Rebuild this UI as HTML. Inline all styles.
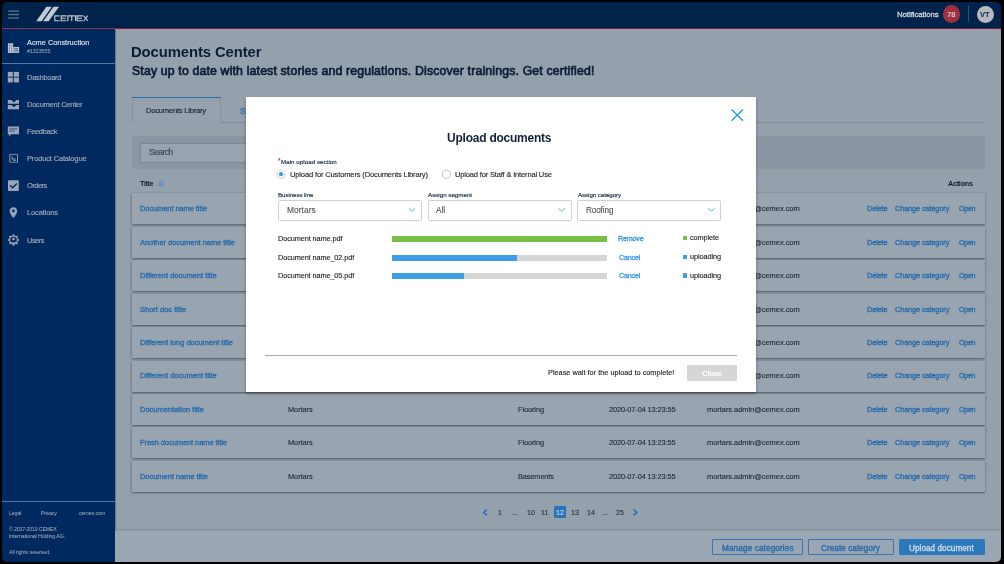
<!DOCTYPE html>
<html><head><meta charset="utf-8">
<style>
*{margin:0;padding:0;box-sizing:border-box}
html,body{width:1004px;height:564px;overflow:hidden;background:#94a0ac;font-family:"Liberation Sans",sans-serif}
body{position:relative}
.a{position:absolute}
.t{position:absolute;white-space:nowrap;line-height:10px;font-family:"Liberation Sans",sans-serif;will-change:transform}
#frame{position:absolute;left:2px;top:2px;width:999px;height:559.5px;border-radius:5px;box-shadow:0 0 0 60px #000;z-index:100}
.row{position:absolute;left:131.6px;width:853.7px;height:31px;background:#98a4af;box-shadow:0 1.5px 1.5px rgba(40,52,68,.4),1px 0 2px rgba(45,58,75,.15),-1px 0 2px rgba(45,58,75,.2)}
.sel{position:absolute;top:200px;height:21px;border:1px solid #cfcfcf;border-radius:1.5px;background:#fff;z-index:11}
.bar{position:absolute;left:392.4px;width:214.4px;height:6px;background:#d5d5d5;z-index:11}
.bar i{position:absolute;left:0;top:0;height:6px}
.sq{position:absolute;left:682.5px;width:4.1px;height:4.1px;z-index:11}
.btn{position:absolute;top:539px;height:16.4px;border:1px solid #3576b3;border-radius:1px}
</style></head><body>
<!-- header -->
<div class="a" style="left:0;top:0;width:1004px;height:28px;background:#00234b"></div>
<div class="a" style="left:0;top:27px;width:1004px;height:1px;background:#001d45"></div>
<div class="a" style="left:0;top:28px;width:115px;height:1px;background:#843a58"></div>
<div class="a" style="left:115px;top:28px;width:889px;height:1px;background:#7a2444"></div>
<div class="a" style="left:115px;top:29px;width:889px;height:1px;background:#9c94a2;z-index:1"></div>
<svg class="a" style="left:0;top:0" width="100" height="28">
  <g fill="#5f7392"><rect x="8.2" y="10.4" width="10.8" height="1.3"/><rect x="8.2" y="13.9" width="10.8" height="1.3"/><rect x="8.2" y="17.4" width="10.8" height="1.3"/></g>
  <g fill="#c4cad3">
    <polygon points="36.2,21.3 41.6,21.3 51.8,6.8 46.4,6.8"/>
    <polygon points="43.2,21.3 48.6,21.3 59,6.8 53.5,6.8"/>
  </g>
  <g fill="none" stroke="#c4cad3" stroke-width="1.15">
    <path d="M59.6,15.8 H54.8 V20.7 H59.6"/>
    <path d="M66.6,15.8 H61.2 V20.7 H66.6 M61.2,18.25 H65.8"/>
    <path d="M67.9,20.9 V15.8 H75.6 V20.9 M71.75,15.8 V20.9"/>
    <path d="M82.8,15.8 H77.1 V20.7 H82.8 M77.1,18.25 H82"/>
    <path d="M83.6,15.6 L87.9,21 M87.9,15.6 L83.6,21"/>
  </g>
</svg>
<div class="a" style="left:951.5px;top:14px;width:17.2px;height:17.2px;margin:-8.6px 0 0 -8.6px;border-radius:50%;background:#a0303f"></div>
<div class="a" style="left:968px;top:6px;width:1px;height:16px;background:#36506f"></div>
<div class="a" style="left:985.3px;top:14.2px;width:17px;height:17px;margin:-8.5px 0 0 -8.5px;border-radius:50%;background:#b3b9c2"></div>
<!-- sidebar -->
<div class="a" style="left:0;top:29px;width:115px;height:540px;background:#002a5f;box-shadow:1px 0 1px rgba(40,55,75,.35)"></div>
<div class="a" style="left:0;top:63px;width:115px;height:1px;background:#56749f"></div>
<div class="a" style="left:0;top:501px;width:115px;height:1px;background:#56749f"></div>
<svg class="a" style="left:0;top:29px" width="30" height="230">
  <g fill="#bcc4cf">
    <!-- building -->
    <rect x="7.9" y="14.3" width="5.3" height="9.6"/>
    <rect x="13.2" y="18" width="5.9" height="5.9"/>
  </g>
  <g fill="#3a5580">
    <rect x="9" y="16" width="1" height="1"/><rect x="11.2" y="16" width="1" height="1"/>
    <rect x="9" y="18.6" width="1" height="1"/><rect x="11.2" y="18.6" width="1" height="1"/>
    <rect x="9" y="21.2" width="1" height="1"/><rect x="11.2" y="21.2" width="1" height="1"/>
    <rect x="14.3" y="19.4" width="3.8" height="1"/><rect x="14.3" y="21.4" width="3.8" height="1"/>
  </g>
  <g fill="#9aa6b8">
    <!-- dashboard -->
    <rect x="7.8" y="42.9" width="5" height="4.8"/><rect x="13.8" y="42.9" width="5.2" height="4.8"/>
    <rect x="7.8" y="48.6" width="5" height="4.8"/><rect x="13.8" y="48.6" width="5.2" height="4.8"/>
    <!-- document center -->
    <path d="M7.8,70.9 H11.3 L13.9,73.6 L16.5,70.9 H19 V74.8 H7.8 Z"/>
    <path d="M7.8,76 H11.3 L13.9,78.3 L16.5,76 H19 V80.3 H7.8 Z"/>
    <!-- feedback -->
    <path d="M7.8,97.5 H19 V105.2 H11.2 L9.2,107.4 V105.2 H7.8 Z"/>
    <!-- product catalogue -->
    <path d="M9.4,125.2 H18 V133.6 H9.4 Z M10.3,126.1 V132.7 H17.1 V126.1 Z"/>
    <path d="M11.6,127.2 H12.5 V129.6 H15.6 V130.4 H11.6 Z M13.2,131.2 H16 V132 H13.2Z"/>
    <!-- orders -->
    <rect x="8" y="151.3" width="10.8" height="10.8" rx="0.8"/>
    <!-- locations -->
    <path d="M13.4,178.2 C10.8,178.2 9.6,180.2 9.6,182 C9.6,184.6 13.4,189 13.4,189 C13.4,189 17.2,184.6 17.2,182 C17.2,180.2 16,178.2 13.4,178.2 Z"/>
    <!-- users gear -->
    <circle cx="13.5" cy="211" r="4.6"/>
  </g>
  <g fill="none" stroke="#9aa6b8" stroke-width="1.6">
    <path d="M13.5,205.3 V216.7 M7.8,211 H19.2 M9.5,207 L17.5,215 M17.5,207 L9.5,215"/>
  </g>
  <g fill="#002a5f">
    <path d="M9.6,156.8 L10.6,155.8 L12.6,157.8 L16.4,154 L17.4,155 L12.6,159.8 Z"/>
    <circle cx="13.4" cy="182" r="1.4"/>
    <circle cx="13.5" cy="211" r="3.3"/>
    <rect x="9.4" y="99.4" width="7.8" height="1" fill="#3a5580"/><rect x="9.4" y="101.6" width="5.4" height="1" fill="#3a5580"/>
  </g>
  <g fill="#9aa6b8"><circle cx="13.5" cy="210" r="1.3"/><path d="M11,212.6 Q13.5,214.6 16,212.6 L15.6,213.9 Q13.5,215.2 11.4,213.9 Z"/></g>
</svg>
<!-- main: tabs -->
<div class="a" style="left:131.8px;top:97.3px;width:88.8px;height:25px;border-left:1px solid #8793a0;border-right:1px solid #8793a0;background:#95a1ac"></div>
<div class="a" style="left:131.8px;top:96.6px;width:88.8px;height:1.1px;background:#2a6cae"></div>
<div class="a" style="left:220.5px;top:122px;width:764.7px;height:1px;background:#7f8b99"></div>
<!-- search panel -->
<div class="a" style="left:131.7px;top:135.7px;width:853.5px;height:32.9px;background:#8a96a3"></div>
<div class="a" style="left:140.3px;top:142.5px;width:500px;height:20.3px;background:#97a3ae;border:1px solid #7c8896;border-radius:1px"></div>
<!-- sort icon -->
<svg class="a" style="left:155px;top:178px" width="12" height="12">
  <path d="M3.4,4.9 L5.95,2.3 L8.5,4.9 Z M3.4,6.5 L5.95,9 L8.5,6.5 Z" fill="#7fa6cc" stroke="#4f87bd" stroke-width="0.7" stroke-linejoin="round"/>
</svg>
<!-- rows -->
<div class="row" style="top:193.3px"></div>
<div class="row" style="top:226.75px"></div>
<div class="row" style="top:260.2px"></div>
<div class="row" style="top:293.65px"></div>
<div class="row" style="top:327.1px"></div>
<div class="row" style="top:360.55px"></div>
<div class="row" style="top:394px"></div>
<div class="row" style="top:427.45px"></div>
<div class="row" style="top:460.9px"></div>
<!-- pagination -->
<svg class="a" style="left:478px;top:505px" width="165" height="14">
  <path d="M486.8,4.6 L483.6,7.4 L486.8,10.2 M633.6,4.6 L636.8,7.4 L633.6,10.2" transform="translate(-478,0)" fill="none" stroke="#2a71b8" stroke-width="1.6"/>
</svg>
<div class="a" style="left:554px;top:506.1px;width:12.2px;height:12.2px;background:#2a74ba;border-radius:1px"></div>
<!-- footer band -->
<div class="a" style="left:115px;top:529.4px;width:889px;height:1.1px;background:#808c99"></div>
<div class="a" style="left:115px;top:530.5px;width:889px;height:34px;background:#9aa6b1"></div>
<div class="btn" style="left:712.1px;width:91.4px"></div>
<div class="btn" style="left:808.1px;width:86.3px"></div>
<div class="btn" style="left:898.9px;width:86.3px;background:#2c78bd;border-color:#2c78bd"></div>
<!-- modal -->
<div class="a" style="left:246.2px;top:96.8px;width:509.6px;height:295px;background:#fff;box-shadow:0 1.5px 3px rgba(0,0,0,.35);z-index:10"></div>
<svg class="a" style="left:728px;top:106px;z-index:11" width="18" height="18">
  <path d="M3.6,3.5 L14.9,14.8 M14.9,3.5 L3.6,14.8" stroke="#2f9be6" stroke-width="1.45" fill="none"/>
</svg>
<svg class="a" style="left:270px;top:165px;z-index:11" width="190" height="20">
  <circle cx="11" cy="9.2" r="4.1" fill="#fff" stroke="#c6c6c6" stroke-width="0.8"/>
  <circle cx="11" cy="9.2" r="2.1" fill="#3c9be2"/>
  <circle cx="176.4" cy="9.2" r="4.1" fill="#fff" stroke="#b4b4b4" stroke-width="0.8"/>
</svg>
<div class="sel" style="left:278px;width:143.5px"></div>
<div class="sel" style="left:427.5px;width:144px"></div>
<div class="sel" style="left:577.4px;width:143.6px"></div>
<svg class="a" style="left:400px;top:204px;z-index:12" width="330" height="12">
  <g fill="none" stroke="#4aa3e6" stroke-width="0.9">
    <path d="M8.8,4.4 L12.05,7.3 L15.3,4.4"/>
    <path d="M158.4,4.4 L161.65,7.3 L164.9,4.4"/>
    <path d="M307.9,4.4 L311.25,7.3 L314.6,4.4"/>
  </g>
</svg>
<div class="bar" style="top:236.1px"><i style="width:214.4px;background:#77c043"></i></div>
<div class="bar" style="top:255.1px"><i style="width:124.6px;background:#3d9ee6"></i></div>
<div class="bar" style="top:272.5px"><i style="width:71.5px;background:#3d9ee6"></i></div>
<div class="sq" style="top:235.65px;background:#77c043"></div>
<div class="sq" style="top:254.75px;background:#3d9ee6"></div>
<div class="sq" style="top:273.45px;background:#3d9ee6"></div>
<div class="a" style="left:265px;top:354.7px;width:472px;height:1px;background:#a9a9a9;z-index:11"></div>
<div class="a" style="left:687.3px;top:365.1px;width:49.7px;height:16.3px;background:#d6d6d6;border-radius:1px;z-index:11"></div>
<div class="t" style="left:896.85px;top:9.89px;font-size:7.84px;letter-spacing:-0.073px;color:#d3d9e2;-webkit-text-stroke:0.27px #d3d9e2">Notifications</div>
<div class="t" style="left:947.49px;top:9.69px;font-size:7.60px;letter-spacing:0.000px;color:#eadde0;-webkit-text-stroke:0.12px #eadde0">78</div>
<div class="t" style="left:980.37px;top:9.99px;font-size:7.60px;letter-spacing:0.000px;color:#0d2140;font-weight:bold">VT</div>
<div class="t" style="left:27.45px;top:38.08px;font-size:7.34px;letter-spacing:0.022px;color:#d2d8e1;-webkit-text-stroke:0.24px #d2d8e1">Acme Construction</div>
<div class="t" style="left:27.45px;top:45.66px;font-size:5.33px;letter-spacing:-0.042px;color:#a9b3c3">#1323555</div>
<div class="t" style="left:27.45px;top:72.79px;font-size:7.50px;letter-spacing:-0.277px;color:#a2adbd;-webkit-text-stroke:0.12px #a2adbd">Dashboard</div>
<div class="t" style="left:27.45px;top:100.09px;font-size:7.50px;letter-spacing:-0.234px;color:#a2adbd;-webkit-text-stroke:0.12px #a2adbd">Document Center</div>
<div class="t" style="left:27.45px;top:127.19px;font-size:7.50px;letter-spacing:-0.355px;color:#a2adbd;-webkit-text-stroke:0.12px #a2adbd">Feedback</div>
<div class="t" style="left:27.45px;top:154.29px;font-size:7.50px;letter-spacing:-0.160px;color:#a2adbd;-webkit-text-stroke:0.12px #a2adbd">Product Catalogue</div>
<div class="t" style="left:27.45px;top:181.39px;font-size:7.50px;letter-spacing:-0.534px;color:#a2adbd;-webkit-text-stroke:0.12px #a2adbd">Orders</div>
<div class="t" style="left:27.45px;top:208.49px;font-size:7.50px;letter-spacing:-0.132px;color:#a2adbd;-webkit-text-stroke:0.12px #a2adbd">Locations</div>
<div class="t" style="left:27.45px;top:235.59px;font-size:7.50px;letter-spacing:-0.534px;color:#a2adbd;-webkit-text-stroke:0.12px #a2adbd">Users</div>
<div class="t" style="left:8.55px;top:508.06px;font-size:5.33px;letter-spacing:-0.152px;color:#a9b3c2">Legal</div>
<div class="t" style="left:41.25px;top:508.06px;font-size:5.23px;letter-spacing:-0.189px;color:#a9b3c2">Privacy</div>
<div class="t" style="left:79.15px;top:508.06px;font-size:5.37px;letter-spacing:-0.143px;color:#a9b3c2">cemex.com</div>
<div class="t" style="left:8.55px;top:523.86px;font-size:5.28px;letter-spacing:-0.180px;color:#a9b3c2">© 2017-2019 CEMEX</div>
<div class="t" style="left:8.55px;top:531.06px;font-size:5.32px;letter-spacing:-0.123px;color:#a9b3c2">International Holding AG.</div>
<div class="t" style="left:8.55px;top:546.86px;font-size:5.30px;letter-spacing:-0.125px;color:#a9b3c2">All rights reserved.</div>
<div class="t" style="left:131.06px;top:46.97px;font-size:14.84px;letter-spacing:-0.094px;color:#0b1c38;font-weight:bold">Documents Center</div>
<div class="t" style="left:132.05px;top:65.94px;font-size:12.28px;letter-spacing:0.168px;color:#0b1c38;-webkit-text-stroke:0.67px #0b1c38">Stay up to date with latest stories and regulations. Discover trainings. Get certified!</div>
<div class="t" style="left:145.85px;top:105.99px;font-size:7.67px;letter-spacing:-0.263px;color:#172130;-webkit-text-stroke:0.12px #172130">Documents Library</div>
<div class="t" style="left:240.05px;top:106.00px;font-size:8.37px;letter-spacing:0.206px;color:#2a6cae;-webkit-text-stroke:0.30px #2a6cae">Staff</div>
<div class="t" style="left:148.85px;top:147.40px;font-size:8.80px;letter-spacing:-0.736px;color:#3a4552;-webkit-text-stroke:0.12px #3a4552">Search</div>
<div class="t" style="left:140.15px;top:178.88px;font-size:7.20px;letter-spacing:-0.294px;color:#0b1c38;font-weight:bold">Title</div>
<div class="t" style="left:948.45px;top:178.98px;font-size:7.19px;letter-spacing:-0.237px;color:#0b1c38;font-weight:bold">Actions</div>
<div class="t" style="left:140.15px;top:204.19px;font-size:7.46px;letter-spacing:-0.069px;color:#2b6daf;-webkit-text-stroke:0.36px #2b6daf">Document name title</div>
<div class="t" style="left:288.05px;top:204.19px;font-size:7.45px;letter-spacing:-0.086px;color:#1f2833;-webkit-text-stroke:0.12px #1f2833">Mortars</div>
<div class="t" style="left:517.75px;top:204.19px;font-size:7.40px;letter-spacing:-0.099px;color:#1f2833;-webkit-text-stroke:0.12px #1f2833">Flooring</div>
<div class="t" style="left:609.15px;top:204.18px;font-size:7.38px;letter-spacing:-0.109px;color:#1f2833;-webkit-text-stroke:0.12px #1f2833">2020-07-04 13:23:55</div>
<div class="t" style="left:706.55px;top:204.19px;font-size:7.51px;letter-spacing:-0.053px;color:#1f2833;-webkit-text-stroke:0.12px #1f2833">mortars.admin@cemex.com</div>
<div class="t" style="left:866.65px;top:204.18px;font-size:7.36px;letter-spacing:-0.131px;color:#2b6daf;-webkit-text-stroke:0.35px #2b6daf">Delete</div>
<div class="t" style="left:895.35px;top:204.18px;font-size:7.36px;letter-spacing:-0.124px;color:#2b6daf;-webkit-text-stroke:0.35px #2b6daf">Change category</div>
<div class="t" style="left:958.85px;top:204.18px;font-size:7.18px;letter-spacing:-0.316px;color:#2b6daf;-webkit-text-stroke:0.34px #2b6daf">Open</div>
<div class="t" style="left:140.15px;top:237.64px;font-size:7.51px;letter-spacing:-0.043px;color:#2b6daf;-webkit-text-stroke:0.36px #2b6daf">Another document name title</div>
<div class="t" style="left:288.05px;top:237.64px;font-size:7.45px;letter-spacing:-0.086px;color:#1f2833;-webkit-text-stroke:0.12px #1f2833">Mortars</div>
<div class="t" style="left:517.75px;top:237.64px;font-size:7.40px;letter-spacing:-0.099px;color:#1f2833;-webkit-text-stroke:0.12px #1f2833">Flooring</div>
<div class="t" style="left:609.15px;top:237.63px;font-size:7.38px;letter-spacing:-0.109px;color:#1f2833;-webkit-text-stroke:0.12px #1f2833">2020-07-04 13:23:55</div>
<div class="t" style="left:706.55px;top:237.64px;font-size:7.51px;letter-spacing:-0.053px;color:#1f2833;-webkit-text-stroke:0.12px #1f2833">mortars.admin@cemex.com</div>
<div class="t" style="left:866.65px;top:237.63px;font-size:7.36px;letter-spacing:-0.131px;color:#2b6daf;-webkit-text-stroke:0.35px #2b6daf">Delete</div>
<div class="t" style="left:895.35px;top:237.63px;font-size:7.36px;letter-spacing:-0.124px;color:#2b6daf;-webkit-text-stroke:0.35px #2b6daf">Change category</div>
<div class="t" style="left:958.85px;top:237.63px;font-size:7.18px;letter-spacing:-0.316px;color:#2b6daf;-webkit-text-stroke:0.34px #2b6daf">Open</div>
<div class="t" style="left:140.15px;top:271.09px;font-size:7.54px;letter-spacing:-0.026px;color:#2b6daf;-webkit-text-stroke:0.37px #2b6daf">Different document title</div>
<div class="t" style="left:288.05px;top:271.09px;font-size:7.45px;letter-spacing:-0.086px;color:#1f2833;-webkit-text-stroke:0.12px #1f2833">Mortars</div>
<div class="t" style="left:517.75px;top:271.09px;font-size:7.40px;letter-spacing:-0.099px;color:#1f2833;-webkit-text-stroke:0.12px #1f2833">Flooring</div>
<div class="t" style="left:609.15px;top:271.08px;font-size:7.38px;letter-spacing:-0.109px;color:#1f2833;-webkit-text-stroke:0.12px #1f2833">2020-07-04 13:23:55</div>
<div class="t" style="left:706.55px;top:271.09px;font-size:7.51px;letter-spacing:-0.053px;color:#1f2833;-webkit-text-stroke:0.12px #1f2833">mortars.admin@cemex.com</div>
<div class="t" style="left:866.65px;top:271.08px;font-size:7.36px;letter-spacing:-0.131px;color:#2b6daf;-webkit-text-stroke:0.35px #2b6daf">Delete</div>
<div class="t" style="left:895.35px;top:271.08px;font-size:7.36px;letter-spacing:-0.124px;color:#2b6daf;-webkit-text-stroke:0.35px #2b6daf">Change category</div>
<div class="t" style="left:958.85px;top:271.08px;font-size:7.18px;letter-spacing:-0.316px;color:#2b6daf;-webkit-text-stroke:0.34px #2b6daf">Open</div>
<div class="t" style="left:140.15px;top:304.54px;font-size:7.55px;letter-spacing:-0.022px;color:#2b6daf;-webkit-text-stroke:0.37px #2b6daf">Short doc title</div>
<div class="t" style="left:288.05px;top:304.54px;font-size:7.45px;letter-spacing:-0.086px;color:#1f2833;-webkit-text-stroke:0.12px #1f2833">Mortars</div>
<div class="t" style="left:517.75px;top:304.54px;font-size:7.40px;letter-spacing:-0.099px;color:#1f2833;-webkit-text-stroke:0.12px #1f2833">Flooring</div>
<div class="t" style="left:609.15px;top:304.53px;font-size:7.38px;letter-spacing:-0.109px;color:#1f2833;-webkit-text-stroke:0.12px #1f2833">2020-07-04 13:23:55</div>
<div class="t" style="left:706.55px;top:304.54px;font-size:7.51px;letter-spacing:-0.053px;color:#1f2833;-webkit-text-stroke:0.12px #1f2833">mortars.admin@cemex.com</div>
<div class="t" style="left:866.65px;top:304.53px;font-size:7.36px;letter-spacing:-0.131px;color:#2b6daf;-webkit-text-stroke:0.35px #2b6daf">Delete</div>
<div class="t" style="left:895.35px;top:304.53px;font-size:7.36px;letter-spacing:-0.124px;color:#2b6daf;-webkit-text-stroke:0.35px #2b6daf">Change category</div>
<div class="t" style="left:958.85px;top:304.53px;font-size:7.18px;letter-spacing:-0.316px;color:#2b6daf;-webkit-text-stroke:0.34px #2b6daf">Open</div>
<div class="t" style="left:140.15px;top:337.99px;font-size:7.54px;letter-spacing:-0.025px;color:#2b6daf;-webkit-text-stroke:0.37px #2b6daf">Different long document title</div>
<div class="t" style="left:288.05px;top:337.99px;font-size:7.45px;letter-spacing:-0.086px;color:#1f2833;-webkit-text-stroke:0.12px #1f2833">Mortars</div>
<div class="t" style="left:517.75px;top:337.99px;font-size:7.40px;letter-spacing:-0.099px;color:#1f2833;-webkit-text-stroke:0.12px #1f2833">Flooring</div>
<div class="t" style="left:609.15px;top:337.98px;font-size:7.38px;letter-spacing:-0.109px;color:#1f2833;-webkit-text-stroke:0.12px #1f2833">2020-07-04 13:23:55</div>
<div class="t" style="left:706.55px;top:337.99px;font-size:7.51px;letter-spacing:-0.053px;color:#1f2833;-webkit-text-stroke:0.12px #1f2833">mortars.admin@cemex.com</div>
<div class="t" style="left:866.65px;top:337.98px;font-size:7.36px;letter-spacing:-0.131px;color:#2b6daf;-webkit-text-stroke:0.35px #2b6daf">Delete</div>
<div class="t" style="left:895.35px;top:337.98px;font-size:7.36px;letter-spacing:-0.124px;color:#2b6daf;-webkit-text-stroke:0.35px #2b6daf">Change category</div>
<div class="t" style="left:958.85px;top:337.98px;font-size:7.18px;letter-spacing:-0.316px;color:#2b6daf;-webkit-text-stroke:0.34px #2b6daf">Open</div>
<div class="t" style="left:140.15px;top:371.44px;font-size:7.54px;letter-spacing:-0.026px;color:#2b6daf;-webkit-text-stroke:0.37px #2b6daf">Different document title</div>
<div class="t" style="left:288.05px;top:371.44px;font-size:7.45px;letter-spacing:-0.086px;color:#1f2833;-webkit-text-stroke:0.12px #1f2833">Mortars</div>
<div class="t" style="left:517.75px;top:371.44px;font-size:7.40px;letter-spacing:-0.099px;color:#1f2833;-webkit-text-stroke:0.12px #1f2833">Flooring</div>
<div class="t" style="left:609.15px;top:371.43px;font-size:7.38px;letter-spacing:-0.109px;color:#1f2833;-webkit-text-stroke:0.12px #1f2833">2020-07-04 13:23:55</div>
<div class="t" style="left:706.55px;top:371.44px;font-size:7.51px;letter-spacing:-0.053px;color:#1f2833;-webkit-text-stroke:0.12px #1f2833">mortars.admin@cemex.com</div>
<div class="t" style="left:866.65px;top:371.43px;font-size:7.36px;letter-spacing:-0.131px;color:#2b6daf;-webkit-text-stroke:0.35px #2b6daf">Delete</div>
<div class="t" style="left:895.35px;top:371.43px;font-size:7.36px;letter-spacing:-0.124px;color:#2b6daf;-webkit-text-stroke:0.35px #2b6daf">Change category</div>
<div class="t" style="left:958.85px;top:371.43px;font-size:7.18px;letter-spacing:-0.316px;color:#2b6daf;-webkit-text-stroke:0.34px #2b6daf">Open</div>
<div class="t" style="left:140.15px;top:404.89px;font-size:7.54px;letter-spacing:-0.030px;color:#2b6daf;-webkit-text-stroke:0.37px #2b6daf">Documentation title</div>
<div class="t" style="left:288.05px;top:404.89px;font-size:7.45px;letter-spacing:-0.086px;color:#1f2833;-webkit-text-stroke:0.12px #1f2833">Mortars</div>
<div class="t" style="left:517.75px;top:404.89px;font-size:7.40px;letter-spacing:-0.099px;color:#1f2833;-webkit-text-stroke:0.12px #1f2833">Flooring</div>
<div class="t" style="left:609.15px;top:404.88px;font-size:7.38px;letter-spacing:-0.109px;color:#1f2833;-webkit-text-stroke:0.12px #1f2833">2020-07-04 13:23:55</div>
<div class="t" style="left:706.55px;top:404.89px;font-size:7.51px;letter-spacing:-0.053px;color:#1f2833;-webkit-text-stroke:0.12px #1f2833">mortars.admin@cemex.com</div>
<div class="t" style="left:866.65px;top:404.88px;font-size:7.36px;letter-spacing:-0.131px;color:#2b6daf;-webkit-text-stroke:0.35px #2b6daf">Delete</div>
<div class="t" style="left:895.35px;top:404.88px;font-size:7.36px;letter-spacing:-0.124px;color:#2b6daf;-webkit-text-stroke:0.35px #2b6daf">Change category</div>
<div class="t" style="left:958.85px;top:404.88px;font-size:7.18px;letter-spacing:-0.316px;color:#2b6daf;-webkit-text-stroke:0.34px #2b6daf">Open</div>
<div class="t" style="left:140.15px;top:438.34px;font-size:7.47px;letter-spacing:-0.064px;color:#2b6daf;-webkit-text-stroke:0.36px #2b6daf">Fresh document name title</div>
<div class="t" style="left:288.05px;top:438.34px;font-size:7.45px;letter-spacing:-0.086px;color:#1f2833;-webkit-text-stroke:0.12px #1f2833">Mortars</div>
<div class="t" style="left:517.75px;top:438.34px;font-size:7.40px;letter-spacing:-0.099px;color:#1f2833;-webkit-text-stroke:0.12px #1f2833">Flooring</div>
<div class="t" style="left:609.15px;top:438.33px;font-size:7.38px;letter-spacing:-0.109px;color:#1f2833;-webkit-text-stroke:0.12px #1f2833">2020-07-04 13:23:55</div>
<div class="t" style="left:706.55px;top:438.34px;font-size:7.51px;letter-spacing:-0.053px;color:#1f2833;-webkit-text-stroke:0.12px #1f2833">mortars.admin@cemex.com</div>
<div class="t" style="left:866.65px;top:438.33px;font-size:7.36px;letter-spacing:-0.131px;color:#2b6daf;-webkit-text-stroke:0.35px #2b6daf">Delete</div>
<div class="t" style="left:895.35px;top:438.33px;font-size:7.36px;letter-spacing:-0.124px;color:#2b6daf;-webkit-text-stroke:0.35px #2b6daf">Change category</div>
<div class="t" style="left:958.85px;top:438.33px;font-size:7.18px;letter-spacing:-0.316px;color:#2b6daf;-webkit-text-stroke:0.34px #2b6daf">Open</div>
<div class="t" style="left:140.15px;top:471.79px;font-size:7.51px;letter-spacing:-0.047px;color:#2b6daf;-webkit-text-stroke:0.36px #2b6daf">Document name title</div>
<div class="t" style="left:288.05px;top:471.79px;font-size:7.45px;letter-spacing:-0.086px;color:#1f2833;-webkit-text-stroke:0.12px #1f2833">Mortars</div>
<div class="t" style="left:517.75px;top:471.79px;font-size:7.40px;letter-spacing:-0.123px;color:#1f2833;-webkit-text-stroke:0.12px #1f2833">Basements</div>
<div class="t" style="left:609.15px;top:471.78px;font-size:7.38px;letter-spacing:-0.109px;color:#1f2833;-webkit-text-stroke:0.12px #1f2833">2020-07-04 13:23:55</div>
<div class="t" style="left:706.55px;top:471.79px;font-size:7.51px;letter-spacing:-0.053px;color:#1f2833;-webkit-text-stroke:0.12px #1f2833">mortars.admin@cemex.com</div>
<div class="t" style="left:866.65px;top:471.78px;font-size:7.36px;letter-spacing:-0.131px;color:#2b6daf;-webkit-text-stroke:0.35px #2b6daf">Delete</div>
<div class="t" style="left:895.35px;top:471.78px;font-size:7.36px;letter-spacing:-0.124px;color:#2b6daf;-webkit-text-stroke:0.35px #2b6daf">Change category</div>
<div class="t" style="left:958.85px;top:471.78px;font-size:7.18px;letter-spacing:-0.316px;color:#2b6daf;-webkit-text-stroke:0.34px #2b6daf">Open</div>
<div class="t" style="left:497.80px;top:508.08px;font-size:7.10px;letter-spacing:0.000px;color:#28323f;-webkit-text-stroke:0.12px #28323f">1</div>
<div class="t" style="left:512.03px;top:508.08px;font-size:7.10px;letter-spacing:0.000px;color:#28323f;-webkit-text-stroke:0.12px #28323f">...</div>
<div class="t" style="left:526.58px;top:508.08px;font-size:7.10px;letter-spacing:0.000px;color:#28323f;-webkit-text-stroke:0.12px #28323f">10</div>
<div class="t" style="left:541.29px;top:508.08px;font-size:7.10px;letter-spacing:0.000px;color:#28323f;-webkit-text-stroke:0.12px #28323f">11</div>
<div class="t" style="left:556.23px;top:508.08px;font-size:7.10px;letter-spacing:0.000px;color:#d0dbe6;-webkit-text-stroke:0.12px #d0dbe6">12</div>
<div class="t" style="left:571.28px;top:508.08px;font-size:7.10px;letter-spacing:0.000px;color:#28323f;-webkit-text-stroke:0.12px #28323f">13</div>
<div class="t" style="left:586.53px;top:508.08px;font-size:7.10px;letter-spacing:0.000px;color:#28323f;-webkit-text-stroke:0.12px #28323f">14</div>
<div class="t" style="left:602.38px;top:508.08px;font-size:7.10px;letter-spacing:0.000px;color:#28323f;-webkit-text-stroke:0.12px #28323f">...</div>
<div class="t" style="left:616.03px;top:508.08px;font-size:7.10px;letter-spacing:0.000px;color:#28323f;-webkit-text-stroke:0.12px #28323f">25</div>
<div class="t" style="left:722.05px;top:543.59px;font-size:8.21px;letter-spacing:0.113px;color:#2a6cae;-webkit-text-stroke:0.42px #2a6cae">Manage categories</div>
<div class="t" style="left:821.35px;top:543.59px;font-size:8.15px;letter-spacing:0.079px;color:#2a6cae;-webkit-text-stroke:0.42px #2a6cae">Create category</div>
<div class="t" style="left:909.15px;top:543.59px;font-size:8.13px;letter-spacing:0.073px;color:#cbd6e2;-webkit-text-stroke:0.42px #cbd6e2">Upload document</div>
<div class="t" style="left:446.95px;top:132.94px;font-size:12.00px;letter-spacing:-0.231px;color:#13223b;font-weight:bold;z-index:12">Upload documents</div>
<div class="t" style="left:277.60px;top:156.07px;font-size:6.40px;letter-spacing:0.000px;color:#d0213a;-webkit-text-stroke:0.12px #d0213a;z-index:12">*</div>
<div class="t" style="left:281.25px;top:156.97px;font-size:6.13px;letter-spacing:0.067px;color:#1b2d4a;-webkit-text-stroke:0.17px #1b2d4a;z-index:12">Main upload section</div>
<div class="t" style="left:289.75px;top:169.79px;font-size:7.61px;letter-spacing:-0.182px;color:#262626;-webkit-text-stroke:0.12px #262626;z-index:12">Upload for Customers (Documents Library)</div>
<div class="t" style="left:454.85px;top:169.79px;font-size:7.57px;letter-spacing:-0.183px;color:#262626;-webkit-text-stroke:0.12px #262626;z-index:12">Upload for Staff &amp; Internal Use</div>
<div class="t" style="left:278.25px;top:189.67px;font-size:6.16px;letter-spacing:-0.070px;color:#1b2d4a;-webkit-text-stroke:0.17px #1b2d4a;z-index:12">Business line</div>
<div class="t" style="left:427.75px;top:189.67px;font-size:6.25px;letter-spacing:-0.029px;color:#1b2d4a;-webkit-text-stroke:0.17px #1b2d4a;z-index:12">Assign segment</div>
<div class="t" style="left:577.65px;top:189.67px;font-size:6.18px;letter-spacing:-0.058px;color:#1b2d4a;-webkit-text-stroke:0.17px #1b2d4a;z-index:12">Assign category</div>
<div class="t" style="left:286.65px;top:205.30px;font-size:8.38px;letter-spacing:0.044px;color:#555;-webkit-text-stroke:0.12px #555;z-index:12">Mortars</div>
<div class="t" style="left:436.05px;top:205.70px;font-size:8.27px;letter-spacing:-0.019px;color:#555;-webkit-text-stroke:0.12px #555;z-index:12">All</div>
<div class="t" style="left:585.95px;top:205.69px;font-size:8.13px;letter-spacing:-0.098px;color:#555;-webkit-text-stroke:0.12px #555;z-index:12">Roofing</div>
<div class="t" style="left:278.25px;top:234.18px;font-size:7.34px;letter-spacing:-0.091px;color:#222;-webkit-text-stroke:0.12px #222;z-index:12">Document name.pdf</div>
<div class="t" style="left:278.25px;top:253.28px;font-size:7.32px;letter-spacing:-0.098px;color:#222;-webkit-text-stroke:0.12px #222;z-index:12">Document name_02.pdf</div>
<div class="t" style="left:278.25px;top:270.68px;font-size:7.32px;letter-spacing:-0.098px;color:#222;-webkit-text-stroke:0.12px #222;z-index:12">Document name_05.pdf</div>
<div class="t" style="left:618.35px;top:233.98px;font-size:7.19px;letter-spacing:-0.221px;color:#3b9be0;-webkit-text-stroke:0.34px #3b9be0;z-index:12">Remove</div>
<div class="t" style="left:619.25px;top:253.48px;font-size:7.18px;letter-spacing:-0.194px;color:#3b9be0;-webkit-text-stroke:0.33px #3b9be0;z-index:12">Cancel</div>
<div class="t" style="left:619.25px;top:271.38px;font-size:7.18px;letter-spacing:-0.194px;color:#3b9be0;-webkit-text-stroke:0.33px #3b9be0;z-index:12">Cancel</div>
<div class="t" style="left:689.95px;top:232.78px;font-size:7.34px;letter-spacing:-0.089px;color:#222;-webkit-text-stroke:0.12px #222;z-index:12">complete</div>
<div class="t" style="left:689.95px;top:252.08px;font-size:7.32px;letter-spacing:-0.096px;color:#222;-webkit-text-stroke:0.12px #222;z-index:12">uploading</div>
<div class="t" style="left:689.95px;top:270.58px;font-size:7.32px;letter-spacing:-0.096px;color:#222;-webkit-text-stroke:0.12px #222;z-index:12">uploading</div>
<div class="t" style="left:547.75px;top:368.08px;font-size:7.27px;letter-spacing:0.031px;color:#222;-webkit-text-stroke:0.12px #222;z-index:12">Please wait for the upload to complete!</div>
<div class="t" style="left:701.95px;top:368.69px;font-size:8.01px;letter-spacing:-0.376px;color:#ffffff;font-weight:bold;z-index:12">Close</div>
<div id="frame"></div>
</body></html>
